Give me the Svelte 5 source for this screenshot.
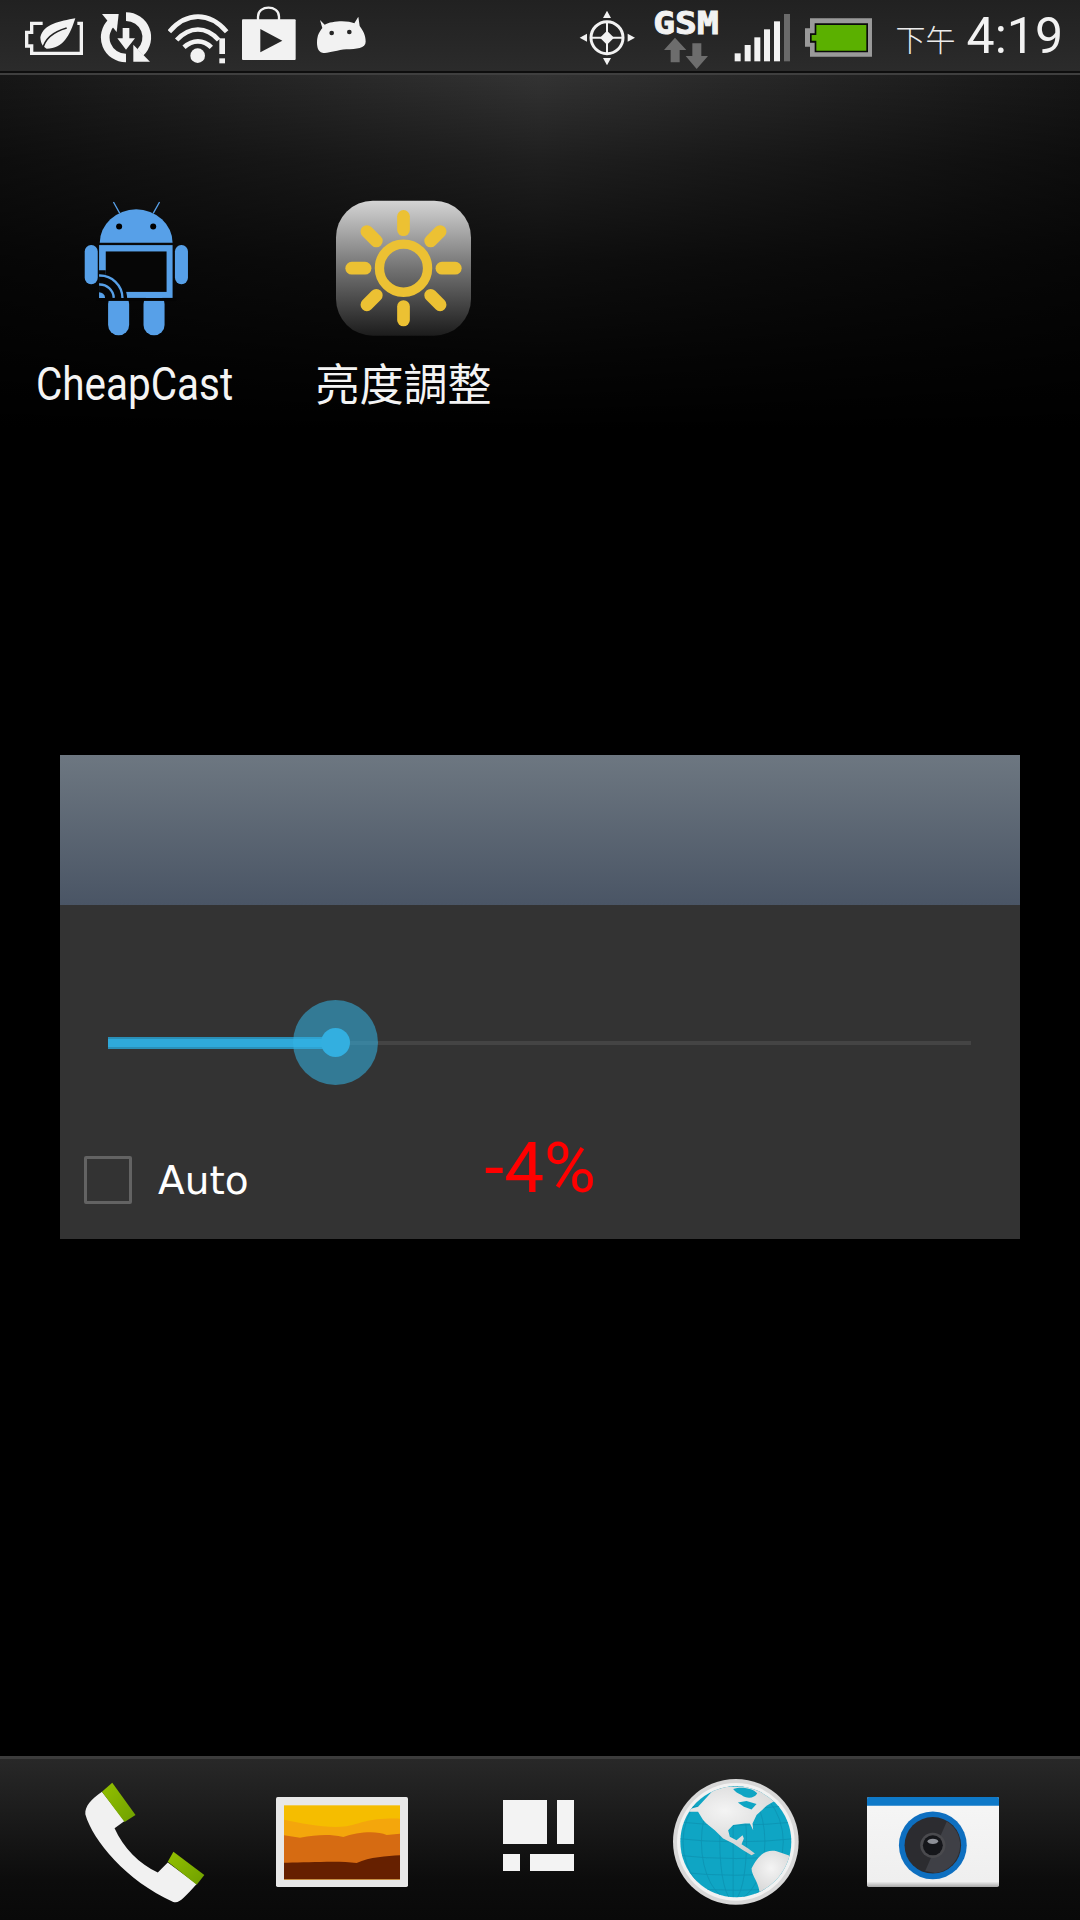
<script>
  const rays = [0, 45, 90, 135, 180, 225, 270, 315];
  const bars = [
    { x: 527, y: 160 },
    { x: 557, y: 135 },
    { x: 586, y: 112 },
    { x: 615, y: 88 },
    { x: 645, y: 64 },
    { x: 675, y: 42, dim: true },
  ];
  const meridians = [40, 95, 150];
  const parallels = [-110, -60, -10, 40, 90, 135];
</script>

<div class="screen">
  <header class="status">
    <div class="group">
      <svg class="i-leaf" viewBox="75 0 225 213">
        <path d="M128 70H95V97H80V138H95V160H244V70H232" fill="none" stroke="#f2f2f2" stroke-width="10" />
        <path d="M226 55C180 64 132 70 121 112C122 130 128 140 140 146C190 146 210 105 226 55Z" fill="#f2f2f2" />
        <path d="M200 84C165 94 135 112 128 148" fill="none" stroke="#222" stroke-width="5" />
      </svg>
      <svg class="i-sync" viewBox="300 0 204 213">
        <path d="M378 174A62 62 0 0 1 335 67" fill="none" stroke="#f2f2f2" stroke-width="26" />
        <path d="M378 50A62 62 0 0 1 421 157" fill="none" stroke="#f2f2f2" stroke-width="26" />
        <path d="M306 42H356L350 96Z" fill="#f2f2f2" />
        <path d="M400 134L450 185H400Z" fill="#f2f2f2" />
        <path d="M368 84H388V115H405L378 149L352 115H368Z" fill="#f2f2f2" />
      </svg>
      <svg class="i-wifi" viewBox="504 0 223 213">
        <g fill="none" stroke="#f2f2f2" stroke-width="14">
          <path d="M508 95C560 35 628 35 680 95" />
          <path d="M530 120C570 78 618 78 656 120" />
          <path d="M552 142C578 118 610 118 634 142" />
        </g>
        <circle cx="593" cy="167" r="22" fill="#f2f2f2" />
        <rect x="658" y="115" width="17" height="47" fill="#f2f2f2" />
        <rect x="658" y="175" width="17" height="15" fill="#f2f2f2" />
      </svg>
      <svg class="i-play" viewBox="727 0 225 213">
        <path d="M775 62V50C775 14 838 14 838 50V62" fill="none" stroke="#f2f2f2" stroke-width="7" />
        <rect x="727" y="58" width="161" height="122" rx="3" fill="#f2f2f2" />
        <path d="M782 87L848 122L782 157Z" fill="#262626" />
      </svg>
      <svg class="i-droid" viewBox="952 0 148 213">
        <path d="M961 60L975 74C995 62 1045 60 1064 70L1076 50L1080 78C1090 92 1098 105 1098 125C1098 146 1070 146 1040 148C1010 150 985 162 968 158C955 155 952 140 952 128C952 105 960 95 968 84Z" fill="#f2f2f2" />
        <circle cx="996" cy="99" r="7" fill="#262626" />
        <circle cx="1049" cy="96" r="7" fill="#262626" />
      </svg>
    </div>
    <div class="group">
      <svg class="i-gps" viewBox="60 0 225 213">
        <circle cx="144" cy="113" r="48" fill="none" stroke="#f2f2f2" stroke-width="9" />
        <path d="M144 65V161M96 113H192" stroke="#f2f2f2" stroke-width="6" />
        <path d="M144 92L165 113L144 134L123 113Z" fill="#f2f2f2" />
        <path d="M144 32L156 54H132ZM144 196L156 174H132ZM62 113L84 101V125ZM228 113L206 101V125Z" fill="#f2f2f2" />
      </svg>
      <svg class="i-gsm" viewBox="285 0 240 213">
        <text class="gsm" x="283" y="102" textLength="196" lengthAdjust="spacingAndGlyphs">GSM</text>
        <path d="M348 113L382 150H362V187H335V150H315Z" fill="#6d6d6d" />
        <path d="M413 207L447 168H427V130H400V168H380Z" fill="#6d6d6d" />
      </svg>
      <svg class="i-signal" viewBox="525 0 212 213">
        {#each bars as bar}
          <rect x={bar.x} y={bar.y} width="18" height={184 - bar.y} fill={bar.dim ? '#6a6a6a' : '#f2f2f2'} />
        {/each}
      </svg>
      <svg class="i-batt" viewBox="737 0 263 213">
        <path d="M752 55H938V170H752V140H737V85H752Z" fill="#9a9a9a" />
        <path d="M766 70H926V157H766V128H752V100H766Z" fill="#0a0a0a" />
        <path d="M771 75H921V152H771V122H757V105H771Z" fill="#5bb000" />
      </svg>
      <span class="ampm">下午</span>
      <span class="clock">4:19</span>
    </div>
  </header>

  <main class="home">
    <div class="shortcuts">
      <div class="shortcut">
        <svg class="app-icon cast" viewBox="190 60 320 410">
          <g fill="#57a0e8">
            <path d="M240 188A109 100 0 0 1 458 188Z" />
            <rect x="195" y="195" width="39" height="117" rx="19" />
            <rect x="465" y="195" width="39" height="117" rx="19" />
            <rect x="265" y="340" width="63" height="125" rx="31" />
            <rect x="371" y="340" width="63" height="125" rx="31" />
          </g>
          <path d="M281 66L300 100M419 66L400 100" stroke="#57a0e8" stroke-width="4" />
          <circle cx="298" cy="139" r="9" fill="#000" />
          <circle cx="400" cy="139" r="9" fill="#000" />
          <rect x="229" y="353" width="240" height="9" fill="#050505" />
          <rect x="238" y="195" width="220" height="158" fill="#57a0e8" />
          <rect x="258" y="214" width="182" height="121" fill="#060606" />
          <path d="M238 270H258V284C290 284 322 320 322 353H238Z" fill="#060606" />
          <g fill="none" stroke="#57a0e8" stroke-width="7">
            <path d="M238 286A68 68 0 0 1 308 353" />
            <path d="M238 313A42 42 0 0 1 282 353" />
          </g>
          <path d="M238 336A18 18 0 0 1 256 353H238Z" fill="#57a0e8" />
        </svg>
        <span class="label latin">CheapCast</span>
      </div>
      <div class="shortcut">
        <svg class="app-icon" viewBox="190 60 320 410">
          <defs>
            <linearGradient id="sunbg" x1="0" y1="0" x2="0" y2="1">
              <stop offset="0" stop-color="#d4d4d4" />
              <stop offset="0.5" stop-color="#737373" />
              <stop offset="1" stop-color="#1c1c1c" />
            </linearGradient>
          </defs>
          <rect x="148" y="62" width="404" height="404" rx="110" fill="url(#sunbg)" />
          <circle cx="350" cy="264" r="72" fill="none" stroke="#ecc133" stroke-width="28" />
          {#each rays as deg}
            <rect x="331" y="90" width="38" height="78" rx="19" fill="#ecc133" transform="rotate({deg} 350 264)" />
          {/each}
        </svg>
        <span class="label">亮度調整</span>
      </div>
    </div>

    <section class="dialog">
      <div class="title-bar"></div>
      <div class="dialog-body">
        <div class="slider">
          <div class="track"></div>
          <div class="fill"></div>
          <div class="halo"></div>
          <div class="knob"></div>
        </div>
        <div class="options">
          <span class="checkbox"></span>
          <span class="auto">Auto</span>
          <span class="value">-4%</span>
        </div>
      </div>
    </section>
  </main>

  <footer class="dock">
    <div class="dock-item">
      <svg class="d-phone" viewBox="100 120 370 370">
        <defs>
          <linearGradient id="tip" x1="0" y1="0" x2="1" y2="1">
            <stop offset="0" stop-color="#93c000" />
            <stop offset="1" stop-color="#6fa000" />
          </linearGradient>
        </defs>
        <path d="M157 152C125 175 105 195 107 220C130 300 230 420 370 483C390 490 400 475 442 430L355 365L325 395C270 370 220 320 195 262L225 240Z" fill="#f1f1f1" />
        <path d="M157 152L188 125L258 222L225 243Z" fill="url(#tip)" />
        <path d="M355 363L372 333L465 403L442 432Z" fill="url(#tip)" />
      </svg>
    </div>
    <div class="dock-item">
      <svg class="d-gallery" viewBox="678 170 396 270">
        <rect x="678" y="170" width="396" height="270" rx="5" fill="#e8e8e8" />
        <rect x="702" y="195" width="348" height="222" fill="#f5bd00" />
        <path d="M702 238C760 250 830 265 890 258C930 250 960 232 1050 235V417H702Z" fill="#f4a60c" />
        <path d="M702 285L750 292C800 285 830 280 880 290C920 275 980 270 1010 284L1050 280V417H702Z" fill="#d66b12" />
        <path d="M702 367C760 368 860 360 920 368C960 350 1010 348 1050 345V417H702Z" fill="#662000" />
      </svg>
    </div>
    <div class="dock-item">
      <div class="d-apps">
        <span class="big"></span>
        <span class="thin"></span>
        <span class="small"></span>
        <span class="wide"></span>
      </div>
    </div>
    <div class="dock-item">
      <svg class="d-globe" viewBox="340 117 377 377">
        <defs>
          <clipPath id="earth"><circle cx="528" cy="305" r="166" /></clipPath>
          <radialGradient id="land" cx="0.4" cy="0.35" r="0.8">
            <stop offset="0" stop-color="#f4f4f4" />
            <stop offset="1" stop-color="#c8c8c8" />
          </radialGradient>
        </defs>
        <circle cx="528" cy="305" r="188" fill="#d8d8d8" />
        <circle cx="528" cy="305" r="176" fill="#f2f2f2" />
        <circle cx="528" cy="305" r="166" fill="#0fa5c4" />
        <g clip-path="url(#earth)">
          <g fill="none" stroke="#0d93b2" stroke-width="2.5">
            <path d="M520 130V480" />
            {#each meridians as m}
              <ellipse cx="520" cy="305" rx={m} ry="175" />
            {/each}
            {#each parallels as p}
              <path d="M350 {305 + p}Q528 {305 + p + 20} 710 {305 + p}" />
            {/each}
          </g>
          <path d="M360 215L415 200L470 140H700V185L640 185L620 197L590 225L578 250L580 270L570 250L555 250L520 255L505 270L510 290L530 300L548 285L552 295L545 312L565 325L585 340L575 345L550 330L520 310L490 295L465 270L440 250L430 240L415 215Z" fill="url(#land)" />
          <path d="M520 147C545 138 580 145 592 160C585 175 560 178 545 165C535 160 525 155 520 147Z" fill="#0fa5c4" />
          <path d="M534 187L560 183L590 192L575 208L552 200Z" fill="#0fa5c4" />
          <path d="M575 385C590 355 610 325 650 333L700 350L720 480H600C604 430 575 410 575 385Z" fill="url(#land)" />
        </g>
      </svg>
    </div>
    <div class="dock-item">
      <svg class="d-camera" viewBox="920 170 397 270">
        <defs>
          <linearGradient id="cambody" x1="0" y1="0" x2="0" y2="1">
            <stop offset="0" stop-color="#f6f6f6" />
            <stop offset="0.94" stop-color="#efefef" />
            <stop offset="1" stop-color="#a9a9a9" />
          </linearGradient>
        </defs>
        <rect x="920" y="170" width="397" height="270" rx="5" fill="url(#cambody)" />
        <path d="M920 196V175A5 5 0 0 1 925 170H1312A5 5 0 0 1 1317 175V196Z" fill="#0e79c8" />
        <circle cx="1118" cy="315" r="102" fill="#0e6fc0" />
        <circle cx="1118" cy="315" r="85" fill="#2c2c30" />
        <path d="M1160 243A84 84 0 0 1 1125 398L1095 392Z" fill="#3f4046" />
        <circle cx="1118" cy="315" r="38" fill="#4a4a4e" />
        <circle cx="1118" cy="315" r="30" fill="#15161a" />
        <ellipse cx="1118" cy="303" rx="16" ry="8" fill="#8d9097" />
      </svg>
    </div>
  </footer>
</div>

<style>
  :global(body) {
    background: #000;
  }

  .screen {
    width: 1080px;
    height: 1920px;
    display: flex;
    flex-direction: column;
    overflow: hidden;
    background: #000;
    color: #fff;
    font-family: 'DejaVu Sans', sans-serif;
  }

  svg {
    display: block;
    flex: none;
  }

  .status {
    height: 71px;
    flex: none;
    display: flex;
    justify-content: space-between;
    padding: 0 17px 0 25px;
    background: linear-gradient(#212121, #2b2b2b);
    border-bottom: 2px solid #0e0e0e;
  }

  .group {
    display: flex;
    align-items: center;
  }

  .group svg {
    height: 71px;
  }

  .i-leaf { width: 75px; }
  .i-sync { width: 68px; }
  .i-wifi { width: 74.33px; }
  .i-play { width: 75px; }
  .i-droid { width: 49.33px; }
  .i-gps { width: 75px; }
  .i-gsm { width: 80px; }
  .i-signal { width: 70.67px; }
  .i-batt { width: 87.67px; }

  .gsm {
    font-family: 'DejaVu Sans Mono', monospace;
    font-weight: 700;
    font-size: 98px;
    fill: #f2f2f2;
    stroke: #f2f2f2;
    stroke-width: 3px;
  }

  .ampm {
    font-family: 'Noto Sans CJK TC', sans-serif;
    font-weight: 300;
    font-size: 30px;
    color: #ececec;
    margin: 4px 11px 0 3px;
  }

  .clock {
    font-family: Roboto, sans-serif;
    font-weight: 400;
    font-size: 50px;
    color: #f2f2f2;
  }

  .home {
    flex: 1;
    border-top: 2px solid #3f3f3f;
    padding-top: 125px;
    background:
      linear-gradient(rgba(0, 0, 0, 0), rgba(0, 0, 0, 0.4) 85px, rgba(0, 0, 0, 0.72) 185px, rgba(0, 0, 0, 0.9) 285px, #000 355px),
      linear-gradient(90deg, #161616, #333 50%, #161616);
  }

  .shortcuts {
    display: grid;
    grid-template-columns: 269px 269px;
  }

  .shortcut {
    display: flex;
    flex-direction: column;
    align-items: center;
  }

  .app-icon {
    width: 107px;
    height: 137px;
    overflow: visible;
  }

  .app-icon.cast {
    margin-left: 4px;
  }

  .label {
    margin-top: 15px;
    font-family: 'Noto Sans CJK TC', sans-serif;
    font-size: 44px;
    line-height: 60px;
    white-space: nowrap;
    color: #f4f4f4;
  }

  .label.latin {
    margin-top: 17px;
    font-family: Roboto, sans-serif;
    font-size: 47px;
    transform: scaleX(0.86);
  }

  .dialog {
    margin: 341px 60px 0;
    height: 484px;
    display: flex;
    flex-direction: column;
  }

  .title-bar {
    height: 150px;
    flex: none;
    background: linear-gradient(#6d7781, #4a5565);
  }

  .dialog-body {
    flex: 1;
    background: #333;
    padding: 95px 20px 0;
  }

  .slider {
    position: relative;
    height: 86px;
    margin: 0 29px 0 28px;
  }

  .track {
    position: absolute;
    left: 0;
    right: 0;
    top: 41px;
    height: 4px;
    background: #444;
  }

  .fill {
    position: absolute;
    left: 0;
    top: 37px;
    width: 228px;
    height: 12px;
    box-sizing: border-box;
    border-top: 2px solid #2a8fb8;
    border-bottom: 2px solid #2a8fb8;
    background: #2fa9da;
  }

  .halo {
    position: absolute;
    left: 185px;
    top: 0;
    width: 85px;
    height: 85px;
    border-radius: 50%;
    background: rgba(51, 181, 229, 0.55);
  }

  .knob {
    position: absolute;
    left: 213px;
    top: 28px;
    width: 29px;
    height: 29px;
    border-radius: 50%;
    background: #33afe0;
  }

  .options {
    display: flex;
    align-items: center;
    padding-left: 4px;
    margin-top: 64px;
    height: 60px;
  }

  .checkbox {
    width: 48px;
    height: 48px;
    box-sizing: border-box;
    border: 3px solid #636363;
    border-radius: 2px;
  }

  .auto {
    margin-left: 26px;
    font-size: 39px;
    color: #fff;
  }

  .value {
    margin-left: 236px;
    margin-top: -26px;
    font-family: Roboto, sans-serif;
    font-weight: 400;
    font-size: 71px;
    color: #f00;
  }

  .dock {
    height: 164px;
    flex: none;
    box-sizing: border-box;
    display: grid;
    grid-template-columns: repeat(5, 197px);
    padding: 5px 48px 0 46px;
    border-top: 3px solid #3c3c3c;
    background: linear-gradient(#282828, #0c0c0c 75%, #090909);
  }

  .dock-item {
    display: flex;
    align-items: center;
    justify-content: center;
  }

  .d-phone {
    width: 123px;
    height: 123px;
  }

  .d-gallery,
  .d-camera {
    width: 132px;
    height: 90px;
  }

  .d-globe {
    width: 126px;
    height: 126px;
  }

  .d-apps {
    width: 71px;
    height: 71px;
    margin-top: -14px;
    display: grid;
    grid-template-columns: 17px 10px 17px 10px 17px;
    grid-template-rows: 44px 10px 17px;
  }

  .d-apps span {
    background: #f3f3f3;
  }

  .big { grid-area: 1 / 1 / 2 / 4; }
  .thin { grid-area: 1 / 5 / 2 / 6; }
  .small { grid-area: 3 / 1 / 4 / 2; }
  .wide { grid-area: 3 / 3 / 4 / 6; }
</style>
